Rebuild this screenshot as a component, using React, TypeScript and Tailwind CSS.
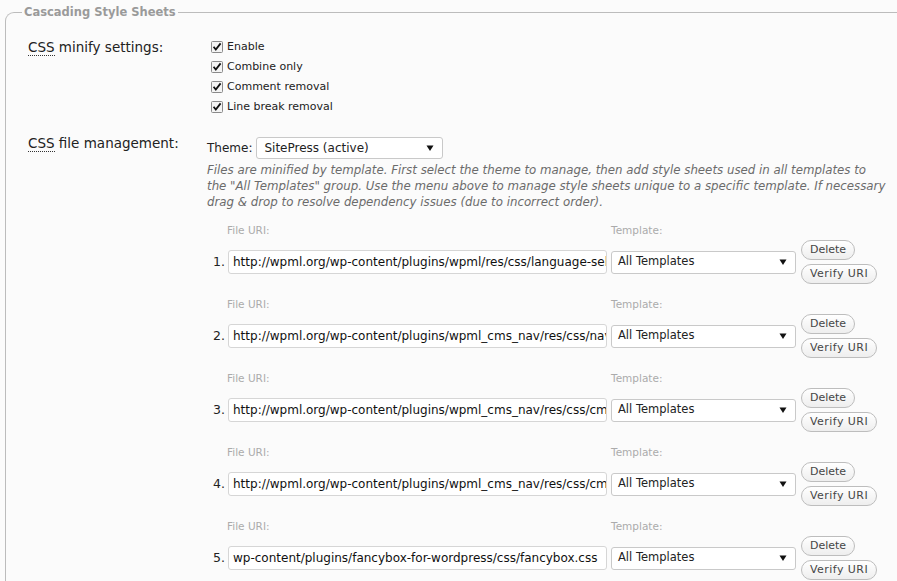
import React from "react";

const font = { fontFamily: '"DejaVu Sans", Verdana, sans-serif' };

function Check() {
  return (
    <svg width="12" height="12" viewBox="0 0 12 12" className="shrink-0">
      <rect x="0.5" y="0.5" width="11" height="11" rx="1" fill="#f4f4f4" stroke="#8a8a8a" />
      <path d="M2.6 5.8 L4.8 8.6 L9.6 2.4" fill="none" stroke="#111" strokeWidth="1.8" />
    </svg>
  );
}

function Select({ value, className }: { value: string; className: string }) {
  return (
    <div
      className={`flex items-center justify-between rounded-[3px] border border-[#c9c9c9] bg-white pl-[6px] pr-[8px] text-[#222] ${className}`}
    >
      <span>{value}</span>
      <svg width="8" height="8" viewBox="0 0 8 8">
        <path d="M0.5 1.5 L7.5 1.5 L4 7 Z" fill="#111" />
      </svg>
    </div>
  );
}

function Btn({ children, className }: { children: React.ReactNode; className?: string }) {
  return (
    <div
      className={`flex h-[20px] items-center rounded-full border border-[#bdbdbd] bg-gradient-to-b from-white to-[#eeeeee] px-[8px] text-[11px] text-[#464646] ${className ?? ""}`}
    >
      {children}
    </div>
  );
}

const files = [
  "http://wpml.org/wp-content/plugins/wpml/res/css/language-selector.css",
  "http://wpml.org/wp-content/plugins/wpml_cms_nav/res/css/navigation.css",
  "http://wpml.org/wp-content/plugins/wpml_cms_nav/res/css/cms-navigation.css",
  "http://wpml.org/wp-content/plugins/wpml_cms_nav/res/css/cms-navigation-base.css",
  "wp-content/plugins/fancybox-for-wordpress/css/fancybox.css",
];

export default function App() {
  return (
    <div className="h-[581px] w-[897px] overflow-hidden bg-[#fbfbfb] pl-[5px] pt-[4px]" style={font}>
      <fieldset className="min-h-[700px] rounded-tl-[9px] border-l border-t border-[#bcbcbc] pl-[22px]">
        <legend className="-ml-[6px] px-[2px] text-[11.5px] font-bold leading-[17px] text-[#9a9a9a]">
          Cascading Style Sheets
        </legend>

        <div className="mt-[16px] flex">
          <div className="w-[179px] pt-[2px] text-[13.5px] leading-[16px] text-[#222]">
            <span className="border-b border-dotted border-[#333]">CSS</span> minify settings:
          </div>
          <div className="flex flex-col">
            {["Enable", "Combine only", "Comment removal", "Line break removal"].map((t) => (
              <div key={t} className="flex h-[20px] items-center gap-[4px] pl-[4px] text-[11px] text-[#222]">
                <Check />
                <span>{t}</span>
              </div>
            ))}
          </div>
        </div>

        <div className="mt-[16px] flex">
          <div className="w-[179px] pt-[2px] text-[13.5px] leading-[16px] text-[#222]">
            <span className="border-b border-dotted border-[#333]">CSS</span> file management:
          </div>
          <div className="flex flex-col">
            <div className="mt-[4px] flex items-center gap-[4px] text-[12px] text-[#222]">
              <span>Theme:</span>
              <Select value="SitePress (active)" className="h-[22px] w-[187px] pl-[7px] text-[12px]" />
            </div>
            <div className="mt-[3px] whitespace-nowrap text-[11.8px] italic leading-[16px] text-[#6b6b6b]">
              Files are minified by template. First select the theme to manage, then add style sheets used in all templates to
              <br />
              the "All Templates" group. Use the menu above to manage style sheets unique to a specific template. If necessary
              <br />
              drag &amp; drop to resolve dependency issues (due to incorrect order).
            </div>

            <div className="mt-[14px] flex flex-col gap-[14px]">
              {files.map((f, i) => (
                <div key={i} className="flex flex-col">
                  <div className="flex h-[14px] items-center text-[10.5px] text-[#ababab]">
                    <span className="ml-[20px] w-[384px]">File URI:</span>
                    <span>Template:</span>
                  </div>
                  <div className="mt-[2px] flex items-center">
                    <span className="w-[21px] pr-[3px] text-right text-[12.5px] text-[#222]">{i + 1}.</span>
                    <div className="flex h-[24px] w-[379px] items-center overflow-hidden whitespace-nowrap rounded-[3px] border border-[#d6d6d6] bg-white pl-[4px] text-[12px] text-[#111]">
                      {f}
                    </div>
                    <Select value="All Templates" className="ml-[4px] h-[23px] w-[185px] text-[11.5px]" />
                    <div className="ml-[5px] flex flex-col items-start gap-[4px]">
                      <Btn>Delete</Btn>
                      <Btn className="tracking-[0.45px]">Verify URI</Btn>
                    </div>
                  </div>
                </div>
              ))}
            </div>
          </div>
        </div>
      </fieldset>
    </div>
  );
}
